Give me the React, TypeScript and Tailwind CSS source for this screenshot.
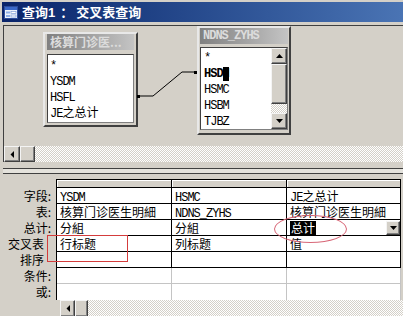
import React from "react";

const ASCII = "font-['Liberation_Mono',monospace] tracking-[-1px]";
const CHECKER =
  "bg-[image:repeating-conic-gradient(#ffffff_0%_25%,#d4d0c8_0%_50%)] bg-[length:2px_2px]";
const BTN =
  "flex items-center justify-center bg-[#d4d0c8] border border-t-[#f4f4f4] border-l-[#f4f4f4] border-r-[#404040] border-b-[#404040] shadow-[inset_-1px_-1px_0_#808080]";

// ascii runs get the narrow mono face, the rest falls to the CJK font
function T({ s }: { s: string }) {
  const parts = s.split(/([\x20-\x7e]+)/).filter(Boolean);
  return (
    <>
      {parts.map((p, i) =>
        /^[\x20-\x7e]+$/.test(p) ? (
          <span key={i} className={ASCII}>
            {p}
          </span>
        ) : (
          <span key={i}>{p}</span>
        )
      )}
    </>
  );
}

function Arrow({ dir }: { dir: "left" | "up" | "down" }) {
  if (dir === "left")
    return (
      <svg width="4" height="7" viewBox="0 0 4 7">
        <polygon points="4,0 4,7 0.5,3.5" fill="#000" />
      </svg>
    );
  if (dir === "up")
    return (
      <svg width="7" height="4" viewBox="0 0 7 4">
        <polygon points="3.5,0 7,4 0,4" fill="#000" />
      </svg>
    );
  return (
    <svg width="7" height="4" viewBox="0 0 7 4">
      <polygon points="0,0 7,0 3.5,4" fill="#000" />
    </svg>
  );
}

function TitleIcon() {
  return (
    <svg width="16" height="16" viewBox="0 0 16 16">
      <rect x="1.5" y="2.5" width="13" height="12" fill="#eef3fb" stroke="#2c4c9c" />
      <rect x="2" y="3" width="12" height="3" fill="#3a68c8" />
      <rect x="3" y="7.5" width="4" height="2" fill="#8fb0e8" />
      <rect x="8" y="7.5" width="5" height="2" fill="#ffffff" stroke="#7090d0" strokeWidth="0.6" />
      <rect x="3" y="11" width="4" height="2" fill="#8fb0e8" />
      <rect x="8" y="11" width="5" height="2" fill="#ffffff" stroke="#7090d0" strokeWidth="0.6" />
    </svg>
  );
}

function TableBox({
  title,
  className,
  children,
}: {
  title: React.ReactNode;
  className: string;
  children: React.ReactNode;
}) {
  return (
    <div
      className={`absolute flex flex-col bg-[#d4d0c8] border-2 border-t-[#e8e8e8] border-l-[#e8e8e8] border-r-[#404040] border-b-[#404040] ${className}`}
    >
      <div className="h-[16px] shrink-0 flex items-center pl-[3px] bg-linear-to-r from-[#808080] to-[#c4c4c4] text-[#dcdcdc] font-bold text-[12px] leading-none whitespace-nowrap overflow-hidden">
        {title}
      </div>
      {children}
    </div>
  );
}

const fields = ["字段:", "表:", "总计:", "交叉表", "排序", "条件:", "或:"];

const cells: (string | null)[][] = [
  ["YSDM", "HSMC", "JE之总计"],
  ["核算门诊医生明細", "NDNS_ZYHS", "核算门诊医生明細"],
  ["分組", "分組", "__total"],
  ["行标题", "列标题", "值"],
  [null, null, null],
  [null, null, null],
  [null, null, null],
];

export default function App() {
  return (
    <div className="relative w-[403px] h-[316px] overflow-hidden bg-[#d4d0c8] font-['Noto_Sans_CJK_SC',sans-serif] text-[12px] text-black">
      {/* title bar */}
      <div className="ml-[2px] mt-[2px] h-[20px] flex items-center gap-[3px] pl-[1px] bg-linear-to-r from-[#0a246a] to-[#4a74b4] text-white font-bold text-[13px] leading-none whitespace-nowrap">
        <TitleIcon />
        <span>
          查询<span className="font-['Liberation_Sans',sans-serif]">1</span>
          <span className="ml-[5px] mr-[3px]">：</span>交叉表查询
        </span>
      </div>

      {/* upper pane with table list */}
      <div className="ml-[3px] mt-[3px] border-l border-t border-[#404040] flex flex-col">
        <div className="relative h-[120px]">
          <TableBox
            title="核算门诊医..."
            className="left-[39px] top-[6px] w-[95px] h-[95px] px-[2px] pt-0"
          >
            <div className="mt-[4px] h-[69px] bg-white border border-t-[#404040] border-l-[#404040] border-r-[#808080] border-b-[#808080] pt-[1px]">
              {["*", "YSDM", "HSFL", "JE之总计"].map((s) => (
                <div key={s} className="h-[16px] pl-[2px] leading-[16px] whitespace-nowrap">
                  <T s={s} />
                </div>
              ))}
            </div>
          </TableBox>

          <TableBox
            title={<span className={ASCII}>NDNS_ZYHS</span>}
            className="left-[193px] top-0 w-[94px] h-[109px] px-[1px]"
          >
            <div className="mt-[3px] h-[83px] flex bg-white border border-t-[#404040] border-l-[#404040] border-r-[#808080] border-b-[#808080]">
              <div className="flex-1 pl-[3px]">
                <div className="h-[16px] leading-[16px]">
                  <T s="*" />
                </div>
                <div className="h-[16px] leading-[16px]">
                  <span className={`${ASCII} font-bold`}>HSD</span>
                  <span className={`${ASCII} bg-black text-black`}>M</span>
                </div>
                {["HSMC", "HSBM", "TJBZ"].map((s) => (
                  <div key={s} className="h-[16px] leading-[16px]">
                    <T s={s} />
                  </div>
                ))}
              </div>
              <div className="w-[16px] flex flex-col">
                <div className={`${BTN} h-[16px]`}>
                  <Arrow dir="up" />
                </div>
                <div className={`${BTN} h-[40px]`} />
                <div className={`flex-1 ${CHECKER}`} />
                <div className={`${BTN} h-[16px]`}>
                  <Arrow dir="down" />
                </div>
              </div>
            </div>
          </TableBox>

          <svg className="absolute inset-0 pointer-events-none" width="399" height="120">
            <polyline
              points="134,70 149,70 178,46 192,46"
              fill="none"
              stroke="#000"
              strokeWidth="1"
            />
            <rect x="133" y="69" width="3" height="3" fill="#000" />
            <rect x="190" y="45" width="3" height="3" fill="#000" />
          </svg>
        </div>

        <div className="h-[16px] flex">
          <div className={`${BTN} w-[16px]`}>
            <Arrow dir="left" />
          </div>
          <div className={`${BTN} w-[15px]`} />
          <div className={`flex-1 ${CHECKER}`} />
        </div>
      </div>

      {/* splitter */}
      <div className="ml-[3px] mt-[6px] h-[6px] border-y border-[#404040] bg-[#e4e2dc]" />

      {/* design grid */}
      <div className="mt-[5px] flex">
        <div className="w-[56px] pt-[9px]">
          {fields.map((f) => (
            <div
              key={f}
              className={`h-[16px] leading-[15px] text-right ${f.endsWith(":") ? "pr-[5px]" : "pr-[12px]"}`}
            >
              {f}
            </div>
          ))}
        </div>
        <div className="grid grid-cols-[115px_115px_114px] border-l border-t border-black">
          {[0, 1, 2].map((c) => (
            <div
              key={`h${c}`}
              className="h-[8px] bg-[#d4d0c8] border-r border-b border-black shadow-[inset_1px_1px_0_#ffffff]"
            />
          ))}
          {cells.map((row, r) =>
            row.map((v, c) => {
              const light = r >= 5;
              const line = light ? "border-[#c4c4c4]" : "border-black";
              const bottom = r === 6 ? "border-b-0" : r === 4 ? "border-b-black" : "";
              return (
                <div
                  key={`${r}-${c}`}
                  className={`h-[16px] bg-white border-r border-b ${line} ${bottom} pl-[3px] leading-[15px] whitespace-nowrap overflow-hidden ${
                    v === "__total" ? "flex items-center justify-between pl-[2px]" : ""
                  }`}
                >
                  {v === "__total" ? (
                    <>
                      <span className="bg-black text-white leading-[14px] px-[1px]">总计</span>
                      <div className={`${BTN} w-[14px] h-[14px]`}>
                        <Arrow dir="down" />
                      </div>
                    </>
                  ) : v ? (
                    <T s={v} />
                  ) : null}
                </div>
              );
            })
          )}
        </div>
      </div>

      {/* bottom scrollbar */}
      <div className="ml-[60px] h-[17px] flex">
        <div className={`${BTN} w-[15px]`}>
          <Arrow dir="left" />
        </div>
        <div className={`${BTN} w-[13px]`} />
        <div className={`flex-1 ${CHECKER}`} />
      </div>

      {/* annotations */}
      <div className="absolute left-[47px] top-[235px] w-[81px] h-[27px] border border-[#d43c3c]" />
      <div className="absolute left-[274px] top-[215px] w-[73px] h-[28px] border border-[#d86878] rounded-[50%]" />
    </div>
  );
}
